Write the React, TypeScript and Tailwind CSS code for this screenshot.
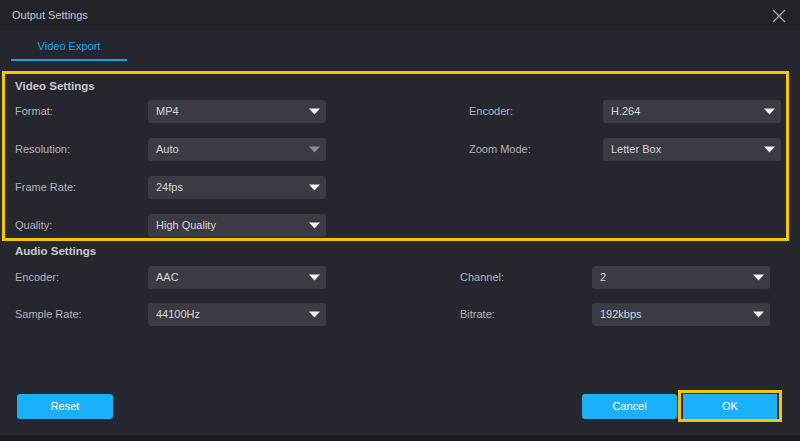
import React from 'react';

const font = { fontFamily: '"Liberation Sans", Arial, sans-serif' };

const Caret: React.FC<{ dim?: boolean }> = ({ dim }) => (
  <svg width="11" height="7" viewBox="0 0 11 7" className="shrink-0">
    <path d="M0 0.5h11L5.5 6.5z" fill={dim ? '#8d8e94' : '#f2f2f2'} />
  </svg>
);

const Select: React.FC<{ value: string; dim?: boolean }> = ({ value, dim }) => (
  <div className="w-[178px] h-[23px] rounded-[3px] bg-[#3a3b43] flex items-center justify-between pl-[8px] pr-[6px] text-[11px] text-[#d6d6d8]">
    <span>{value}</span>
    <Caret dim={dim} />
  </div>
);

type Field = { label: string; value: string; dim?: boolean };

const Row: React.FC<{ left: Field; right?: Field; gapW: string; rightW: string }> = ({ left, right, gapW, rightW }) => (
  <div className="flex items-center h-[23px]">
    <div className="w-[133px] text-[11px] text-[#b3b3b7]">{left.label}</div>
    <Select value={left.value} dim={left.dim} />
    {right && (
      <>
        <div className={gapW} />
        <div className={`${rightW} text-[11px] text-[#b3b3b7]`}>{right.label}</div>
        <Select value={right.value} dim={right.dim} />
      </>
    )}
  </div>
);

export default function App() {
  return (
    <div style={font} className="w-[800px] h-[441px] bg-[#26272e] flex flex-col overflow-hidden">
      {/* title bar */}
      <div className="h-[31px] shrink-0 bg-[#222329] flex items-center justify-between pl-[12px] pr-[14px]">
        <span className="text-[11px] text-[#c4c4c8]">Output Settings</span>
        <svg width="14" height="14" viewBox="0 0 14 14">
          <path d="M1 1L13 13M13 1L1 13" stroke="#a9aab0" strokeWidth="1.2" />
        </svg>
      </div>

      {/* tabs */}
      <div className="h-[31px] shrink-0 pl-[11px] flex">
        <div className="w-[116px] h-full flex flex-col">
          <div className="flex-1 flex items-center justify-center text-[11px] text-[#24a6ea] pt-[2px]">Video Export</div>
          <div className="h-[2px] bg-[#1e9fe2] mb-[1px]" />
        </div>
      </div>

      {/* video settings */}
      <div className="mt-[9px] ml-[2px] w-[787px] h-[170px] border-[3px] border-[#f8c500] pl-[10px] flex flex-col">
        <div className="h-[23px] flex items-end pb-[2px] text-[11.5px] font-bold text-[#c9c9cd]">Video Settings</div>
        <div className="mt-[3px] flex flex-col gap-[15px]">
          <Row gapW="w-[143px]" rightW="w-[134px]" left={{ label: 'Format:', value: 'MP4' }} right={{ label: 'Encoder:', value: 'H.264' }} />
          <Row gapW="w-[143px]" rightW="w-[134px]" left={{ label: 'Resolution:', value: 'Auto', dim: true }} right={{ label: 'Zoom Mode:', value: 'Letter Box' }} />
          <Row gapW="w-[143px]" rightW="w-[134px]" left={{ label: 'Frame Rate:', value: '24fps' }} />
          <Row gapW="w-[143px]" rightW="w-[134px]" left={{ label: 'Quality:', value: 'High Quality' }} />
        </div>
      </div>

      {/* audio settings */}
      <div className="pl-[15px] flex flex-col">
        <div className="h-[19px] flex items-end text-[11.5px] font-bold text-[#c9c9cd]">Audio Settings</div>
        <div className="mt-[6px] flex flex-col gap-[14px]">
          <Row gapW="w-[134px]" rightW="w-[132px]" left={{ label: 'Encoder:', value: 'AAC' }} right={{ label: 'Channel:', value: '2' }} />
          <Row gapW="w-[134px]" rightW="w-[132px]" left={{ label: 'Sample Rate:', value: '44100Hz' }} right={{ label: 'Bitrate:', value: '192kbps' }} />
        </div>
      </div>

      <div className="flex-1" />

      {/* footer */}
      <div className="flex items-center pl-[17px] pr-[18px] mb-[13px]">
        <button className="w-[96px] h-[25px] rounded-[3px] bg-[#1bb1fa] text-[11px] text-white">Reset</button>
        <div className="flex-1" />
        <button className="w-[95px] h-[25px] rounded-[3px] bg-[#1bb1fa] text-[11px] text-white">Cancel</button>
        <div className="ml-[1px] border-[3px] border-[#f8c500] px-[2px] pt-[1px]">
          <button className="w-[94px] h-[25px] block bg-[#1bb1fa] text-[11px] text-white">OK</button>
        </div>
      </div>
      <div className="h-[6px] shrink-0 bg-[#1a1b20]" />
    </div>
  );
}
